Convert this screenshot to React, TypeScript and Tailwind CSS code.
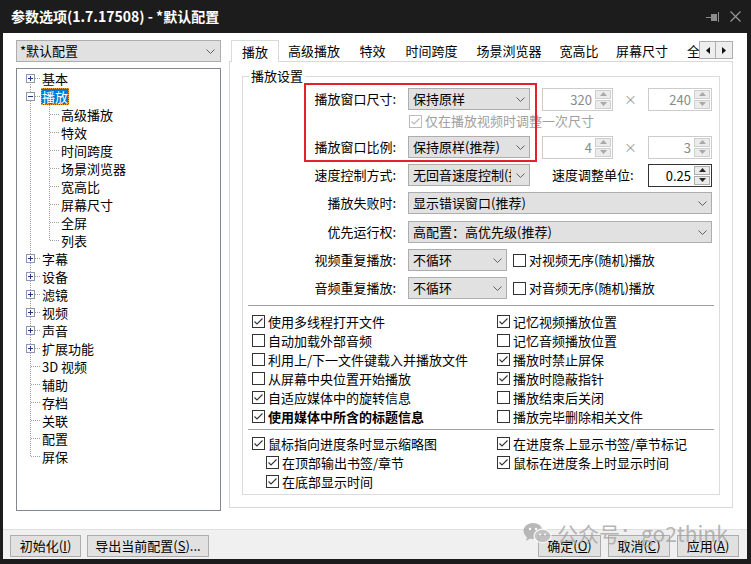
import React from "react"

type TreeItem = {
  label: string
  level: 0 | 1
  exp?: "+" | "-"
  sel?: boolean
  lastChild?: boolean
}

const treeItems: TreeItem[] = [
  { label: "基本", level: 0, exp: "+" },
  { label: "播放", level: 0, exp: "-", sel: true },
  { label: "高级播放", level: 1 },
  { label: "特效", level: 1 },
  { label: "时间跨度", level: 1 },
  { label: "场景浏览器", level: 1 },
  { label: "宽高比", level: 1 },
  { label: "屏幕尺寸", level: 1 },
  { label: "全屏", level: 1 },
  { label: "列表", level: 1, lastChild: true },
  { label: "字幕", level: 0, exp: "+" },
  { label: "设备", level: 0, exp: "+" },
  { label: "滤镜", level: 0, exp: "+" },
  { label: "视频", level: 0, exp: "+" },
  { label: "声音", level: 0, exp: "+" },
  { label: "扩展功能", level: 0, exp: "+" },
  { label: "3D 视频", level: 0 },
  { label: "辅助", level: 0 },
  { label: "存档", level: 0 },
  { label: "关联", level: 0 },
  { label: "配置", level: 0 },
  { label: "屏保", level: 0 },
]

const tabs = [
  { label: "播放", w: "w-[48px]" },
  { label: "高级播放", w: "w-[70px]" },
  { label: "特效", w: "w-[47px]" },
  { label: "时间跨度", w: "w-[71px]" },
  { label: "场景浏览器", w: "w-[84px]" },
  { label: "宽高比", w: "w-[56px]" },
  { label: "屏幕尺寸", w: "w-[70px]" },
  { label: "全屏", w: "w-[60px]" },
]

const dot = "#a0a0a0"

function TreeGutter({ item, first, last }: { item: TreeItem; first: boolean; last: boolean }) {
  if (item.level === 1) {
    return (
      <svg width="39" height="18" className="shrink-0" shapeRendering="crispEdges">
        <line x1="9.5" y1="0" x2="9.5" y2="18" stroke={dot} strokeDasharray="1 1" />
        <line x1="28.5" y1="0" x2="28.5" y2={item.lastChild ? 9 : 18} stroke={dot} strokeDasharray="1 1" />
        <line x1="29" y1="9.5" x2="39" y2="9.5" stroke={dot} strokeDasharray="1 1" />
      </svg>
    )
  }
  return (
    <svg width="20" height="18" className="shrink-0" shapeRendering="crispEdges">
      <line x1="9.5" y1={first ? 9 : 0} x2="9.5" y2={last ? 10 : 18} stroke={dot} strokeDasharray="1 1" />
      <line x1="10" y1="9.5" x2="20" y2="9.5" stroke={dot} strokeDasharray="1 1" />
      {item.exp && (
        <>
          <rect x="5.5" y="5.5" width="8" height="8" fill="#fff" stroke="#8e98ad" />
          <line x1="7" y1="9.5" x2="12" y2="9.5" stroke="#1f3b87" />
          {item.exp === "+" && <line x1="9.5" y1="7" x2="9.5" y2="12" stroke="#1f3b87" />}
        </>
      )}
    </svg>
  )
}

function Chevron() {
  return (
    <svg width="9" height="5" className="shrink-0">
      <polyline points="0.5,0.5 4.5,4.5 8.5,0.5" fill="none" stroke="#606060" />
    </svg>
  )
}

function Combo({ text, w }: { text: string; w: string }) {
  return (
    <div className={`flex h-[22px] shrink-0 items-center border border-[#adadad] bg-[#e1e1e1] pl-[4px] pr-[4px] ${w}`}>
      <span className="mr-[5px] flex-1 overflow-hidden whitespace-nowrap leading-[20px]">{text}</span>
      <Chevron />
    </div>
  )
}

function SpinBtn({ up, enabled }: { up?: boolean; enabled?: boolean }) {
  const c = enabled ? "#2a2a2a" : "#a8a8a8"
  return (
    <div className={`flex flex-1 items-center justify-center border bg-[#ebebeb] ${enabled ? "border-[#adadad]" : "border-[#cfcfcf]"}`}>
      <svg width="7" height="4">
        <path d={up ? "M0 4 L3.5 0 L7 4Z" : "M0 0 L3.5 4 L7 0Z"} fill={c} />
      </svg>
    </div>
  )
}

function Spin({ value, w, enabled }: { value: string; w: string; enabled?: boolean }) {
  return (
    <div className={`flex h-[23px] shrink-0 border bg-white ${enabled ? "border-[#333333]" : "border-[#cccccc]"} ${w}`}>
      <div className={`flex-1 pr-[3px] text-right leading-[21px] ${enabled ? "text-black" : "text-[#8a8a8a]"}`}>{value}</div>
      <div className="my-[1px] mr-[1px] flex w-[16px] flex-col gap-[1px]">
        <SpinBtn up enabled={enabled} />
        <SpinBtn enabled={enabled} />
      </div>
    </div>
  )
}

function Check({ label, checked, disabled, bold }: { label: string; checked?: boolean; disabled?: boolean; bold?: boolean }) {
  const c = disabled ? "#b8b8b8" : "#333333"
  return (
    <div className="flex items-center">
      <span className={`flex h-[13px] w-[13px] shrink-0 items-center justify-center border bg-white ${disabled ? "border-[#bcbcbc]" : "border-[#333333]"}`}>
        {checked && (
          <svg width="11" height="11">
            <polyline points="1.5,5.5 4,8 9.5,2.5" fill="none" stroke={c} strokeWidth="1.1" />
          </svg>
        )}
      </span>
      <span className={`ml-[3px] whitespace-nowrap ${disabled ? "text-[#a0a0a0]" : "text-black"} ${bold ? "font-bold" : ""}`}>{label}</span>
    </div>
  )
}

function Row({ label, children, className = "" }: { label: string; children: React.ReactNode; className?: string }) {
  return (
    <div className={`flex h-[22px] items-center ${className}`}>
      <div className="w-[153px] shrink-0 whitespace-nowrap text-right">{label}</div>
      <div className="ml-[12px] flex items-center">{children}</div>
    </div>
  )
}

function Btn({ children, w }: { children: React.ReactNode; w: string }) {
  return (
    <div className={`flex h-[22px] items-center justify-center border border-[#adadad] bg-[#e1e1e1] leading-[20px] ${w}`}>
      {children}
    </div>
  )
}

export default function App() {
  return (
    <div className="relative flex h-[564px] w-[751px] flex-col overflow-hidden bg-[#1c1c1c] font-['Noto_Sans_CJK_SC',sans-serif] text-[13px] text-black">
      {/* title bar */}
      <div className="flex h-[33px] shrink-0 items-center pl-[11px] pr-[10px]">
        <span className="text-[14px] font-bold text-white">参数选项(1.7.17508) - *默认配置</span>
        <div className="ml-auto flex items-center gap-[10px]">
          <svg width="14" height="10" shapeRendering="crispEdges">
            <line x1="0" y1="5.5" x2="5" y2="5.5" stroke="#8c8c8c" />
            <rect x="5" y="2" width="6" height="7" fill="#8c8c8c" />
            <line x1="12.5" y1="0" x2="12.5" y2="11" stroke="#8c8c8c" />
          </svg>
          <svg width="11" height="11">
            <path d="M0.5 0.5 L10.5 10.5 M10.5 0.5 L0.5 10.5" stroke="#9a9a9a" strokeWidth="1.1" />
          </svg>
        </div>
      </div>

      <div className="mb-[5px] ml-[3px] mr-[4px] flex flex-1 flex-col bg-white">
        <div className="flex flex-1">
          {/* left column */}
          <div className="ml-[13px] mt-[7px] flex w-[205px] flex-col">
            <div className="flex h-[22px] items-center border border-[#adadad] bg-[#e1e1e1] pl-[3px] pr-[5px]">
              <span className="flex-1 leading-[20px]">*默认配置</span>
              <Chevron />
            </div>
            <div className="mt-[6px] h-[443px] border border-[#828790] bg-white pl-[4px]">
              {treeItems.map((it, i) => (
                <div key={it.label} className="flex h-[18px] items-center">
                  <TreeGutter item={it} first={i === 0} last={i === treeItems.length - 1} />
                  <span
                    className={`px-[1px] leading-[17px] whitespace-nowrap ${
                      it.sel ? "bg-[#0078d7] text-white outline outline-1 -outline-offset-1 outline-dotted outline-[#f0a030]" : ""
                    }`}
                  >
                    {it.label}
                  </span>
                </div>
              ))}
            </div>
          </div>

          {/* right column */}
          <div className="ml-[8px] mt-[7px] flex w-[504px] flex-col">
            <div className="relative z-10 flex h-[22px]">
              <div className="flex w-[471px] overflow-hidden pl-[2px]">
                {tabs.map((t, i) => (
                  <div
                    key={t.label}
                    className={`flex h-[22px] shrink-0 items-center whitespace-nowrap ${t.w} ${
                      i === 0
                        ? "justify-center border border-b-0 border-[#d9d9d9] bg-white"
                        : i === tabs.length - 1
                        ? "justify-start pl-[10px]"
                        : "justify-center"
                    }`}
                  >
                    {t.label}
                  </div>
                ))}
              </div>
              <div className="mt-[1px] flex h-[18px]">
                <div className="flex w-[17px] items-center justify-center border border-[#adadad] bg-[#eeeeee]">
                  <svg width="4" height="7"><path d="M4 0 L0 3.5 L4 7Z" fill="#111" /></svg>
                </div>
                <div className="flex w-[17px] items-center justify-center border border-l-0 border-[#adadad] bg-[#eeeeee]">
                  <svg width="4" height="7"><path d="M0 0 L4 3.5 L0 7Z" fill="#111" /></svg>
                </div>
              </div>
            </div>

            <div className="-mt-px h-[447px] border border-[#d9d9d9] bg-white px-[12px] pt-[6px]">
              <fieldset className="h-[427px] border border-[#dcdcdc]">
                <legend className="ml-[6px] px-[2px] leading-[16px]">播放设置</legend>

                <div className="relative pt-[4px]">
                  <Row label="播放窗口尺寸:">
                    <Combo text="保持原样" w="w-[122px]" />
                    <div className="ml-[12px] flex items-center">
                      <Spin value="320" w="w-[71px]" />
                      <span className="w-[35px] text-center text-[#9a9a9a]">×</span>
                      <Spin value="240" w="w-[64px]" />
                    </div>
                  </Row>
                  <div className="flex h-[22px] items-center pl-[166px]">
                    <Check label="仅在播放视频时调整一次尺寸" checked disabled />
                  </div>
                  <Row label="播放窗口比例:" className="mt-[4px]">
                    <Combo text="保持原样(推荐)" w="w-[122px]" />
                    <div className="ml-[12px] flex items-center">
                      <Spin value="4" w="w-[71px]" />
                      <span className="w-[35px] text-center text-[#9a9a9a]">×</span>
                      <Spin value="3" w="w-[64px]" />
                    </div>
                  </Row>
                  <div className="pointer-events-none absolute left-[61px] top-[-1px] h-[79px] w-[233px] border-2 border-[#e3202b]" />
                </div>

                <Row label="速度控制方式:" className="mt-[6px]">
                  <Combo text="无回音速度控制(推荐)" w="w-[122px]" />
                  <span className="w-[118px] whitespace-nowrap pl-[22px] text-left">速度调整单位:</span>
                  <Spin value="0.25" w="w-[64px]" enabled />
                </Row>
                <Row label="播放失败时:" className="mt-[6px]">
                  <Combo text="显示错误窗口(推荐)" w="w-[304px]" />
                </Row>
                <Row label="优先运行权:" className="mt-[7px]">
                  <Combo text="高配置：高优先级(推荐)" w="w-[304px]" />
                </Row>
                <Row label="视频重复播放:" className="mt-[6px]">
                  <Combo text="不循环" w="w-[99px]" />
                  <div className="ml-[6px]">
                    <Check label="对视频无序(随机)播放" />
                  </div>
                </Row>
                <Row label="音频重复播放:" className="mt-[6px]">
                  <Combo text="不循环" w="w-[99px]" />
                  <div className="ml-[6px]">
                    <Check label="对音频无序(随机)播放" />
                  </div>
                </Row>

                <div className="mx-[5px] mt-[6px] border-t border-[#a0a0a0]" />

                <div className="mt-[6px] flex pl-[9px] leading-[19px]">
                  <div className="flex w-[245px] flex-col">
                    <div className="h-[19px]"><Check label="使用多线程打开文件" checked /></div>
                    <div className="h-[19px]"><Check label="自动加载外部音频" /></div>
                    <div className="h-[19px]"><Check label="利用上/下一文件键载入并播放文件" /></div>
                    <div className="h-[19px]"><Check label="从屏幕中央位置开始播放" /></div>
                    <div className="h-[19px]"><Check label="自适应媒体中的旋转信息" checked /></div>
                    <div className="h-[19px]"><Check label="使用媒体中所含的标题信息" checked bold /></div>
                  </div>
                  <div className="flex flex-col">
                    <div className="h-[19px]"><Check label="记忆视频播放位置" checked /></div>
                    <div className="h-[19px]"><Check label="记忆音频播放位置" /></div>
                    <div className="h-[19px]"><Check label="播放时禁止屏保" checked /></div>
                    <div className="h-[19px]"><Check label="播放时隐蔽指针" checked /></div>
                    <div className="h-[19px]"><Check label="播放结束后关闭" /></div>
                    <div className="h-[19px]"><Check label="播放完毕删除相关文件" /></div>
                  </div>
                </div>

                <div className="mx-[5px] mt-[3px] border-t border-[#a0a0a0]" />

                <div className="mt-[4px] flex pl-[9px] leading-[19px]">
                  <div className="flex w-[245px] flex-col">
                    <div className="h-[19px]"><Check label="鼠标指向进度条时显示缩略图" checked /></div>
                    <div className="ml-[14px] h-[19px]"><Check label="在顶部输出书签/章节" checked /></div>
                    <div className="ml-[14px] h-[19px]"><Check label="在底部显示时间" checked /></div>
                  </div>
                  <div className="flex flex-col">
                    <div className="h-[19px]"><Check label="在进度条上显示书签/章节标记" checked /></div>
                    <div className="h-[19px]"><Check label="鼠标在进度条上时显示时间" checked /></div>
                  </div>
                </div>
              </fieldset>
            </div>
          </div>
        </div>

        {/* bottom bar */}
        <div className="flex h-[30px] shrink-0 items-start border-t border-[#dfdfdf] bg-[#f0f0f0] pl-[7px] pr-[8px] pt-[5px]">
          <Btn w="w-[71px]">初始化(<u>I</u>)</Btn>
          <div className="ml-[6px]">
            <Btn w="w-[122px]">导出当前配置(<u>S</u>)...</Btn>
          </div>
          <div className="ml-auto flex gap-[7px]">
            <Btn w="w-[63px]">确定(<u>O</u>)</Btn>
            <Btn w="w-[62px]">取消(<u>C</u>)</Btn>
            <Btn w="w-[62px]">应用(<u>A</u>)</Btn>
          </div>
        </div>
      </div>

      {/* watermark */}
      <div className="pointer-events-none absolute left-[523px] top-[521px] flex items-center text-[21px] leading-[24px] text-[#a4a4a4]/80">
        <svg width="30" height="22" viewBox="0 0 30 22" className="opacity-80">
          <ellipse cx="10" cy="9" rx="9.5" ry="8" fill="#a8a8a8" />
          <path d="M4 15 L3 19 L8 16Z" fill="#a8a8a8" />
          <ellipse cx="19.5" cy="14" rx="8.5" ry="6.8" fill="#b8b8b8" stroke="#fff" strokeWidth="1.2" />
          <circle cx="7" cy="7" r="1.2" fill="#fff" />
          <circle cx="13" cy="7" r="1.2" fill="#fff" />
          <circle cx="17" cy="12.5" r="1" fill="#fff" />
          <circle cx="22" cy="12.5" r="1" fill="#fff" />
        </svg>
        <span className="ml-[4px] whitespace-nowrap">公众号：go2think</span>
      </div>
    </div>
  )
}
